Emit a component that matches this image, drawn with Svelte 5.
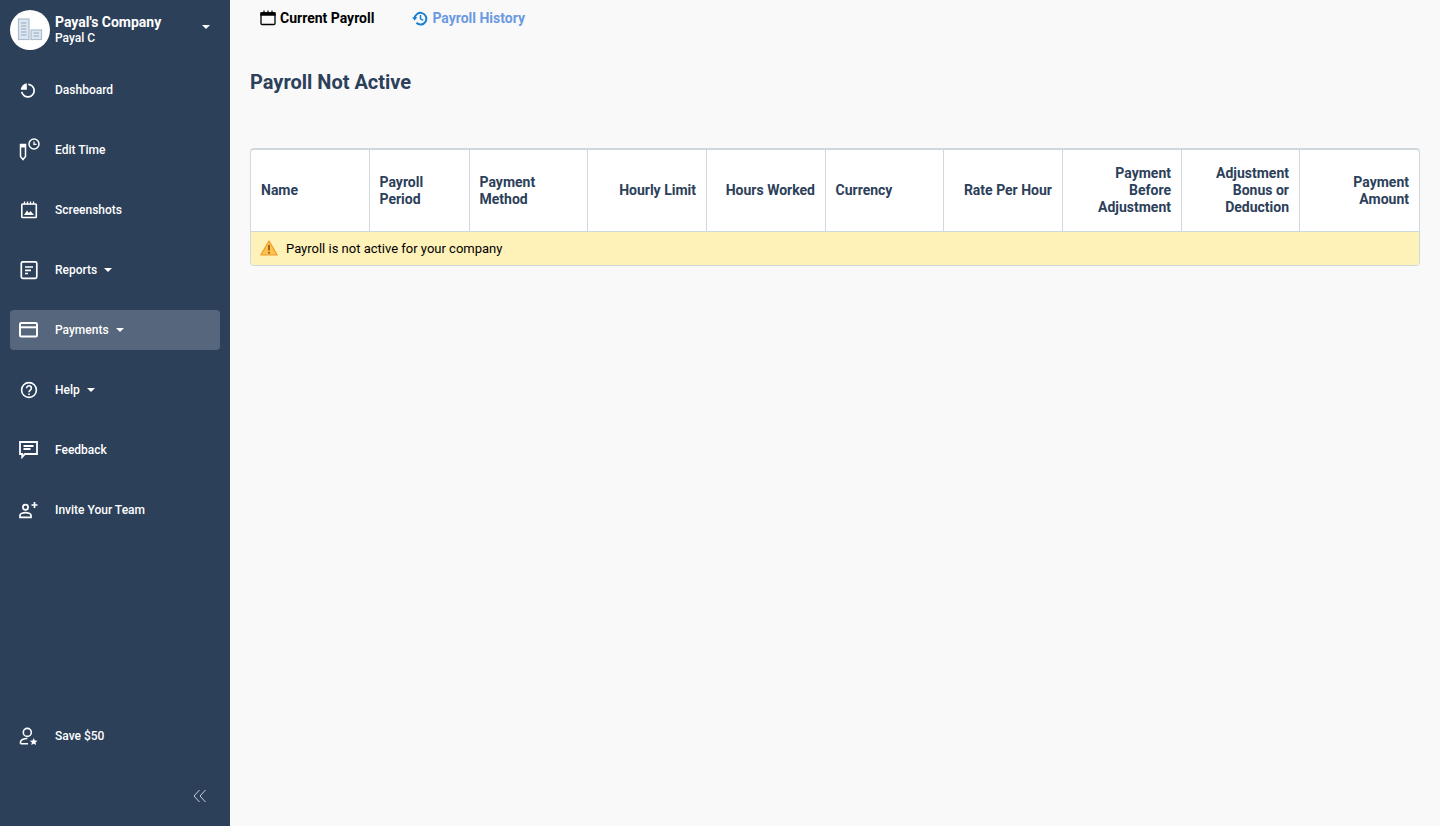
<script>
  const navItems = [
    { label: "Dashboard", icon: "dashboard" },
    { label: "Edit Time", icon: "time" },
    { label: "Screenshots", icon: "shots" },
    { label: "Reports", icon: "reports", caret: true },
    { label: "Payments", icon: "payments", caret: true, active: true },
    { label: "Help", icon: "help", caret: true },
    { label: "Feedback", icon: "feedback" },
    { label: "Invite Your Team", icon: "invite" }
  ];

  const columns = [
    { lines: ["Name"], width: 118 },
    { lines: ["Payroll", "Period"], width: 100 },
    { lines: ["Payment", "Method"], width: 118 },
    { lines: ["Hourly Limit"], width: 119, right: true },
    { lines: ["Hours Worked"], width: 119, right: true },
    { lines: ["Currency"], width: 118 },
    { lines: ["Rate Per Hour"], width: 119, right: true },
    { lines: ["Payment", "Before", "Adjustment"], width: 119, right: true },
    { lines: ["Adjustment", "Bonus or", "Deduction"], width: 118, right: true },
    { lines: ["Payment", "Amount"], width: 120, right: true }
  ];
</script>

<div class="layout">
  <aside class="sidebar">
    <div class="account">
      <div class="avatar">
        <svg width="26" height="24" viewBox="0 0 26 24" fill="none" stroke="#a9bdd0" stroke-width="1.2">
          <rect x="1.500" y="1" width="10.500" height="20.500" fill="#dfe7ee" />
          <path d="M4 5h5.500M4 8h5.500M4 11h5.500M4 14h5.500M4 17h5.500" stroke-width="1.400" />
          <rect x="14" y="12" width="10.500" height="9.500" fill="#dfe7ee" />
          <path d="M16.500 15h5.500M16.500 18h5.500" stroke-width="1.400" />
        </svg>
      </div>
      <div class="who">
        <div class="company">Payal's Company</div>
        <div class="person">Payal C</div>
      </div>
      <span class="caret account-caret"></span>
    </div>

    <nav class="nav">
      {#each navItems as item}
        <div class="nav-item" class:active={item.active}>
          <span class="nav-icon">
            {#if item.icon === "dashboard"}
              <svg width="20" height="20" viewBox="0 0 20 20" fill="none" stroke="#fff" stroke-width="1.700">
                <path d="M7.800 3.200A6.800 6.800 0 0 0 1.800 9.800H7.800Z" fill="#fff" stroke="none" />
                <path d="M9.300 4.300a6.300 6.300 0 1 1-6.600 7.600" />
              </svg>
            {:else if item.icon === "time"}
              <svg width="22" height="24" viewBox="0 0 22 24" fill="none" stroke="#fff">
                <path d="M2.500 6.500h5v12l-2.500 3-2.500-3Z" stroke-width="1.500" />
                <path d="M2.500 6h5v3.500h-5Z" fill="#fff" stroke="none" />
                <circle cx="16" cy="6" r="5" stroke-width="1.500" />
                <path d="M16 3.500V6.300H18.500" stroke-width="1.300" />
              </svg>
            {:else if item.icon === "shots"}
              <svg width="18" height="18" viewBox="0 0 18 18" fill="none" stroke="#fff" stroke-width="1.600">
                <rect x="1.800" y="3" width="14.500" height="13.500" rx="0.800" />
                <path d="M4.500 0.500v3M7.500 0.500v3M10.500 0.500v3M13.500 0.500v3" stroke-width="1.300" />
                <path d="M4 14l3-4.500 2 2.500 1.500-2 3.500 4Z" fill="#fff" stroke="none" />
              </svg>
            {:else if item.icon === "reports"}
              <svg width="18" height="20" viewBox="0 0 18 20" fill="none" stroke="#fff" stroke-width="1.700">
                <rect x="1.300" y="1.800" width="15.500" height="16.500" rx="1.500" />
                <path d="M5 7h8M5 10.300h6M5 13.500h3" />
              </svg>
            {:else if item.icon === "payments"}
              <svg width="20" height="16" viewBox="0 0 20 16" fill="none" stroke="#fff" stroke-width="2">
                <rect x="1" y="1" width="17" height="13.500" rx="1.200" />
                <path d="M1 5.300h17" />
              </svg>
            {:else if item.icon === "help"}
              <svg width="18" height="18" viewBox="0 0 18 18" fill="none" stroke="#fff" stroke-width="1.600">
                <circle cx="9" cy="9" r="7.400" />
                <path d="M6.600 7.200a2.400 2.400 0 1 1 3.700 2c-.9.600-1.300 1-1.300 2" />
                <path d="M9 12.400v1.500" />
              </svg>
            {:else if item.icon === "feedback"}
              <svg width="20" height="18" viewBox="0 0 20 18" fill="none" stroke="#fff" stroke-width="1.800">
                <path d="M1 1h17v12H6l-2.800 3v-3H1Z" />
                <path d="M4.500 5h10M4.500 8h7" />
              </svg>
            {:else if item.icon === "invite"}
              <svg width="20" height="18" viewBox="0 0 20 18" fill="none" stroke="#fff" stroke-width="1.700">
                <circle cx="6.500" cy="6.300" r="2.600" />
                <path d="M1 16.300v-2.200c0-1.500 3.500-2.500 5.500-2.500s5.500 1 5.500 2.500v2.200Z" />
                <path d="M15.500 1v6M12.500 4h6" />
              </svg>
            {/if}
          </span>
          <span class="nav-label">{item.label}</span>
          {#if item.caret}<span class="caret"></span>{/if}
        </div>
      {/each}
    </nav>

    <div class="save">
      <span class="nav-icon">
        <svg width="20" height="20" viewBox="0 0 20 20" fill="none" stroke="#fff" stroke-width="1.600">
          <circle cx="8.300" cy="6.400" r="4" />
          <path d="M1.500 17.800V16c0-2.200 3-3.500 6.800-3.500M1.500 17.800h7.500" />
          <path d="M14.700 12l1.100 2.500 2.700.2-2 1.800.6 2.600-2.400-1.400-2.400 1.400.6-2.600-2-1.800 2.700-.2Z" fill="#fff" stroke="none" />
        </svg>
      </span>
      <span class="nav-label">Save $50</span>
    </div>

    <div class="collapse">
      <svg width="14" height="14" viewBox="0 0 14 14" fill="none" stroke="#c5ced8" stroke-width="1">
        <path d="M6.500 1 1 7l5.500 6M12.500 1 7 7l5.500 6" />
      </svg>
    </div>
  </aside>

  <main class="content">
    <div class="tabs">
      <div class="tab current">
        <svg width="16" height="16" viewBox="0 0 16 16" fill="none" stroke="#000" stroke-width="1.300">
          <rect x="1" y="2.800" width="14" height="11.700" rx="1" />
          <path d="M1 3h14v2H1Z" fill="#000" />
          <path d="M4 .5v2.500M8 .5v2.500M12 .5v2.500" stroke-width="1.200" />
        </svg>
        Current Payroll
      </div>
      <div class="tab history">
        <svg width="16" height="15" viewBox="0 0 16 15" fill="none" stroke="#1b7fd1" stroke-width="2">
          <path d="M2.700 7.500a5.800 5.800 0 1 1 1.700 4.300" />
          <path d="M0 6.300h5.400L2.700 9.500Z" fill="#1b7fd1" stroke="none" />
          <path d="M8.500 4v3.800l2.700 1.500" stroke-width="1.500" />
        </svg>
        Payroll History
      </div>
    </div>

    <h1>Payroll Not Active</h1>

    <div class="table-wrap">
      <table>
        <colgroup>
          {#each columns as col}
            <col style="width: {col.width}px" />
          {/each}
        </colgroup>
        <thead>
          <tr>
            {#each columns as col}
              <th class:right={col.right} class:two={col.lines.length === 2}>
                {#each col.lines as line}
                  <div>{line}</div>
                {/each}
              </th>
            {/each}
          </tr>
        </thead>
        <tbody>
          <tr>
            <td colspan="10">
              <div class="notice">
                <svg width="18" height="16" viewBox="0 0 18 16">
                  <path d="M9 1 17.200 15H.8Z" fill="#fbc34d" stroke="#ee9a2b" stroke-width="1.200" stroke-linejoin="round" />
                  <path d="M9 5v5.500" stroke="#9a5a10" stroke-width="1.800" />
                  <circle cx="9" cy="12.700" r="1" fill="#9a5a10" />
                </svg>
                Payroll is not active for your company
              </div>
            </td>
          </tr>
        </tbody>
      </table>
    </div>
  </main>
</div>

<style>
  :global(body) {
    margin: 0;
    background: #f9f9f9;
    font-family: Roboto, "Liberation Sans", sans-serif;
  }

  .layout {
    display: flex;
    height: 826px;
    overflow: hidden;
  }

  .sidebar {
    width: 230px;
    flex: none;
    background: #2c405a;
    color: #fff;
    display: flex;
    flex-direction: column;
    padding: 10px 10px 0;
    box-sizing: border-box;
  }

  .account {
    display: flex;
    align-items: center;
    height: 40px;
  }

  .avatar {
    width: 40px;
    height: 40px;
    border-radius: 50%;
    background: #fff;
    display: flex;
    align-items: center;
    justify-content: center;
    flex: none;
    margin-right: 5px;
  }

  .who {
    flex: 1;
  }

  .company {
    font-size: 14px;
    font-weight: 700;
    line-height: 17px;
    margin-top: -1px;
  }

  .person {
    font-size: 12px;
    font-weight: 500;
    line-height: 15px;
  }

  .account-caret {
    margin: -6px 10px 0 0;
  }

  .caret {
    width: 0;
    height: 0;
    border-left: 4px solid transparent;
    border-right: 4px solid transparent;
    border-top: 4px solid #fff;
    margin-left: 7px;
  }

  .nav {
    display: flex;
    flex-direction: column;
    gap: 20px;
    margin-top: 20px;
    flex: 1;
  }

  .nav-item,
  .save {
    display: flex;
    align-items: center;
    height: 40px;
    border-radius: 4px;
  }

  .nav-item.active {
    background: #56667c;
  }

  .nav-icon {
    width: 45px;
    flex: none;
    display: flex;
    justify-content: center;
    padding-right: 7px;
    box-sizing: border-box;
  }

  .nav-label {
    font-size: 12px;
    font-weight: 500;
    white-space: nowrap;
  }

  .save {
    margin-bottom: 33px;
  }

  .collapse {
    display: flex;
    justify-content: flex-end;
    padding-right: 13px;
    height: 37px;
    align-items: flex-start;
  }

  .content {
    flex: 1;
    padding: 0 20px;
    min-width: 0;
  }

  .tabs {
    display: flex;
    height: 36px;
    align-items: center;
    padding-left: 10px;
    gap: 38px;
  }

  .tab {
    display: flex;
    align-items: center;
    gap: 4px;
    font-size: 14px;
    font-weight: 700;
  }

  .current {
    color: #000;
  }

  .history {
    color: #6a9ae2;
  }

  h1 {
    margin: 34px 0 0;
    font-size: 20px;
    font-weight: 700;
    line-height: 24px;
    color: #2c405a;
  }

  .table-wrap {
    margin-top: 54px;
    background: #fff;
    border: 1px solid #cfd8dd;
    border-top-width: 2px;
    border-radius: 4px;
    overflow: hidden;
    width: 1170px;
    box-sizing: border-box;
  }

  table {
    border-collapse: collapse;
    table-layout: fixed;
    width: 100%;
  }

  th {
    height: 81px;
    padding: 0 10px;
    text-align: left;
    font-size: 14px;
    font-weight: 700;
    line-height: 17px;
    color: #2c405a;
    border-right: 1px solid #cfd8dd;
    border-bottom: 1px solid #cfd8dd;
    box-sizing: border-box;
  }

  th.two {
    padding-top: 1px;
  }

  th.right {
    text-align: right;
    padding-right: 9.5px;
  }

  th:last-child {
    border-right: 0;
    padding-right: 10px;
  }

  td {
    padding: 0;
    background: #fff2b8;
  }

  .notice {
    display: flex;
    align-items: center;
    gap: 8px;
    height: 33px;
    padding-left: 9px;
    font-size: 13px;
    color: #000;
  }
</style>
